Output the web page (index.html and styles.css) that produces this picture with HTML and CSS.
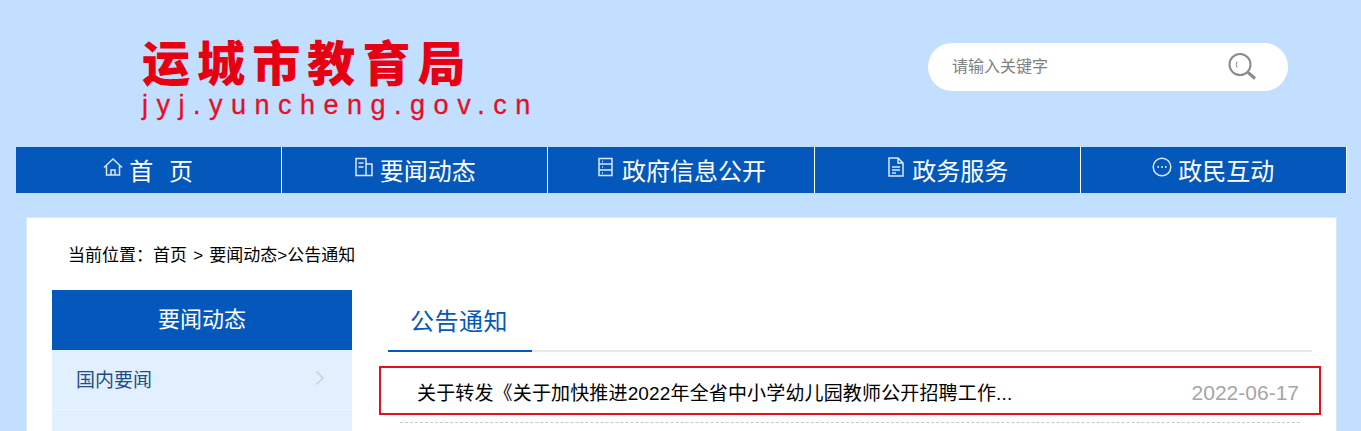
FILE: index.html
```html
<!DOCTYPE html>
<html lang="zh-CN">
<head>
<meta charset="utf-8">
<title>运城市教育局</title>
<link rel="stylesheet" href="styles.css">
</head>
<body>
<header class="header">
  <div class="logo">
    <div class="logo-cn">运城市教育局</div>
    <div class="logo-en">jyj.yuncheng.gov.cn</div>
  </div>
  <div class="search">
    <span class="search-text">请输入关键字</span>
    <svg class="search-icon" width="30" height="30" viewBox="0 0 30 30" fill="none" stroke="#8a8a8a">
      <circle cx="13" cy="12.5" r="10.5" stroke-width="2"/>
      <path d="M21 20.5l7 6" stroke-width="3"/>
      <path d="M10 9.5q-1.500 3 0 6" stroke-width="1"/>
    </svg>
  </div>
</header>
<nav class="nav">
  <a class="nav-item">
    <svg class="nav-icon" width="20" height="20" viewBox="0 0 20 20" fill="none" stroke="#dbe7f5" stroke-width="1.500"><path d="M1 10.500L10 2l9 8.500M3.500 9v9h13V9M8 18v-5h4v5"/></svg>
    <span class="nav-label nav-label-wide">首&nbsp;&nbsp;页</span>
  </a>
  <a class="nav-item">
    <svg class="nav-icon" width="20" height="20" viewBox="0 0 20 20" fill="none" stroke="#dbe7f5" stroke-width="1.500"><path d="M2 1.500h10v17H2zM12 7h6v11.500h-6M4.500 6h5M4.500 10h5"/></svg>
    <span class="nav-label">要闻动态</span>
  </a>
  <a class="nav-item">
    <svg class="nav-icon" width="20" height="20" viewBox="0 0 20 20" fill="none" stroke="#dbe7f5" stroke-width="1.500"><path d="M3 1.500h13v17H3zM3 7h13M3 13h13M6 4.500h1M6 10h1M6 16h1"/></svg>
    <span class="nav-label">政府信息公开</span>
  </a>
  <a class="nav-item">
    <svg class="nav-icon" width="20" height="20" viewBox="0 0 20 20" fill="none" stroke="#dbe7f5" stroke-width="1.500"><path d="M3 1h9l5 5v13H3zM12 1v5h5M6 10h8M6 13h8M6 16h4"/></svg>
    <span class="nav-label">政务服务</span>
  </a>
  <a class="nav-item">
    <svg class="nav-icon" width="20" height="20" viewBox="0 0 20 20" fill="none" stroke="#dbe7f5" stroke-width="1.500"><circle cx="10" cy="10" r="8.800"/><path d="M5.500 10h1.500M9.300 10h1.500M13 10h1.500" stroke-width="1.800"/></svg>
    <span class="nav-label">政民互动</span>
  </a>
</nav>
<main class="card">
  <div class="crumb">当前位置：首页 &gt; 要闻动态&gt;公告通知</div>
  <div class="columns">
    <aside class="side">
      <h2 class="side-head">要闻动态</h2>
      <a class="side-item">国内要闻
        <svg class="chev" width="10" height="16" viewBox="0 0 10 16" fill="none" stroke="#c9cfd6" stroke-width="1.500"><path d="M1.500 1.500L8 8l-6.500 6.500"/></svg>
      </a>
      <a class="side-item"></a>
    </aside>
    <section class="content">
      <div class="tabs"><span class="tab">公告通知</span></div>
      <div class="row highlight">
        <span class="row-title">关于转发《关于加快推进2022年全省中小学幼儿园教师公开招聘工作...</span>
        <span class="row-date">2022-06-17</span>
      </div>
      <div class="dash"></div>
    </section>
  </div>
</main>
</body>
</html>
```
FILE: styles.css
```css
html, body { margin: 0; padding: 0; height: 431px; overflow: hidden; }
body { background: #c2dfff; font-family: "Liberation Sans", "Noto Sans CJK SC", sans-serif; color: #000; }
.header { display: flex; height: 147px; box-sizing: border-box; padding: 35px 73px 0 142px; justify-content: space-between; }
.logo { width: 400px; }
.logo-cn { font-family: "Noto Sans CJK SC", sans-serif; font-weight: 900; font-size: 48px; line-height: 50px; letter-spacing: 7.100px; color: #e60012; white-space: nowrap; }
.logo-en { font-family: "Liberation Sans", sans-serif; font-size: 27px; line-height: 28px; letter-spacing: 8.500px; color: #e60f25; -webkit-text-stroke: 0.3px #e60f25; margin-top: 6px; white-space: nowrap; }
.search { width: 360px; height: 48px; margin-top: 8px; background: #fff; border-radius: 24px; display: flex; align-items: center; justify-content: space-between; padding: 0 31px 0 24px; box-sizing: border-box; }
.search-text { font-size: 16px; color: #7f7f7f; padding-bottom: 5px; }
.search-icon { display: block; }
.nav { display: flex; margin: 0 14px 0 16px; height: 46px; background: #0558bb; }
.nav-item { width: 266.200px; box-sizing: border-box; border-right: 1px solid #fff; display: flex; align-items: center; justify-content: center; gap: 6px; color: #fff; }
.nav-icon { display: block; margin-top: -6px; }
.nav-label { font-size: 24px; line-height: 46px; padding-top: 3px; }
.nav-label-wide { letter-spacing: 0.800px; }
.card { margin: 25px 25px 0 27px; height: 213px; overflow: hidden; background: #fff; box-shadow: 0 0 0 1px #dce9f8; }
.crumb { font-size: 17px; line-height: 24px; word-spacing: 1.500px; padding: 26px 0 0 41px; height: 47px; box-sizing: border-box; }
.columns { display: flex; margin-top: 25px; padding: 0 24px 0 25px; gap: 36px; }
.side { width: 300px; flex: none; }
.side-head { margin: 0; height: 60px; background: #0558bb; color: #fff; font-weight: 400; font-size: 22px; line-height: 60px; text-align: center; }
.side-item { display: flex; height: 60px; box-sizing: border-box; align-items: center; justify-content: space-between; padding: 0 27px 3px 24px; background: #e1efff; color: #1f4e87; font-size: 19px; border-bottom: 1px solid #f0f7ff; }
.content { flex: 1; }
.tabs { height: 62px; box-sizing: border-box; border-bottom: 2px solid #e8e8e8; }
.tab { display: inline-block; box-sizing: border-box; width: 144px; height: 62px; border-bottom: 2px solid #0558bb; padding: 2px 0 0 22px; line-height: 60px; font-size: 24px; letter-spacing: 0.500px; color: #0558bb; }
.row { display: flex; justify-content: space-between; align-items: center; height: 49px; margin-top: 14px; padding: 0 20px 0 36px; }
.highlight { margin-left: -9px; margin-right: -9px; border: 2px solid #e60f1f; box-sizing: border-box; }
.row-title { font-size: 19px; letter-spacing: 0.15px; padding-top: 2px; }
.row-date { font-size: 21px; color: #a5a5a5; padding-top: 4px; }
.dash { height: 0; margin: 7px 12px 0 12px; border-top: 1px dashed #c8c8c8; }
```
